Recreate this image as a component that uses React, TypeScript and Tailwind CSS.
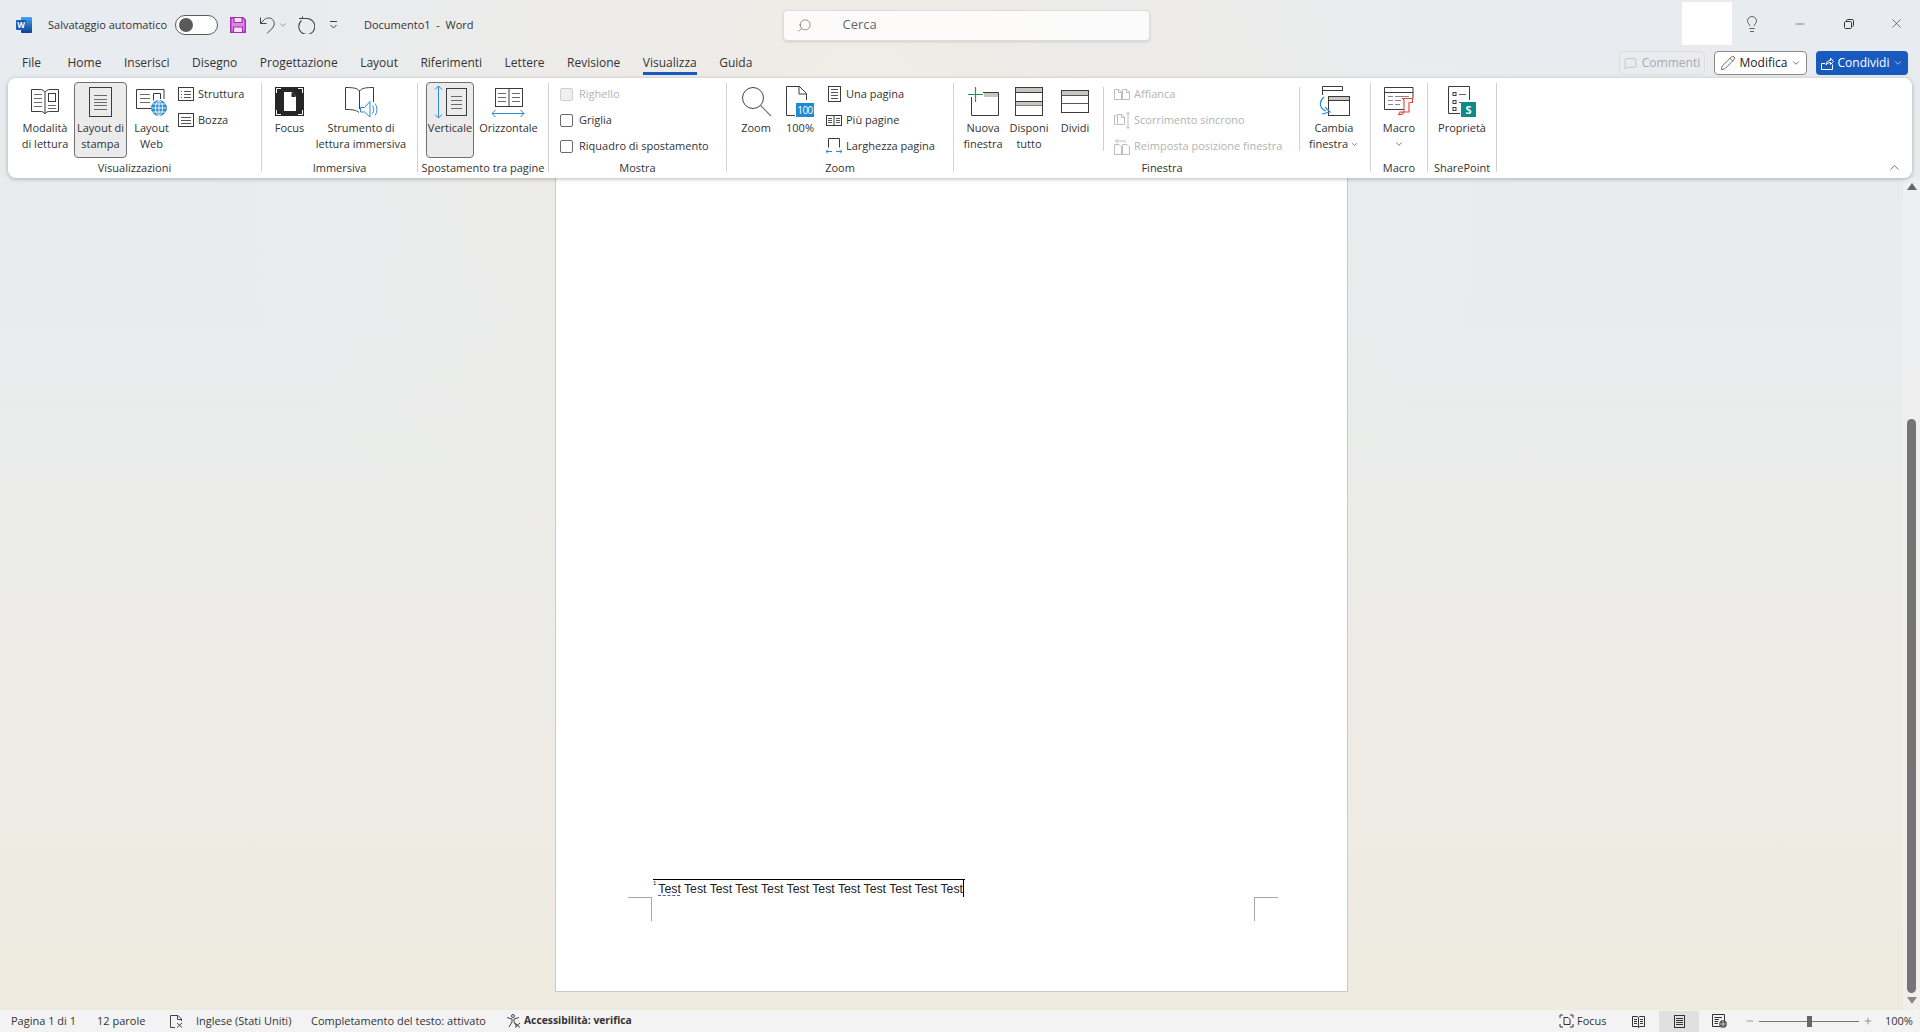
import React from "react";
import { ChevronDown, ChevronUp, Lightbulb, Minus, X, Search, Pencil, MessageSquare, Plus } from "lucide-react";

const INK = "#3b3b3b";
const BLUE = "#2a8ad4";

function Ic({ w, h, children, className }: { w: number; h: number; children: React.ReactNode; className?: string }) {
  return (
    <svg width={w} height={h} viewBox={`0 0 ${w} ${h}`} fill="none" stroke={INK} strokeWidth={1} className={className}>
      {children}
    </svg>
  );
}

function Lines({ x1, x2, ys, c = "#6a6a6a" }: { x1: number; x2: number; ys: number[]; c?: string }) {
  return <path stroke={c} d={ys.map((y) => `M${x1} ${y + 0.5}H${x2}`).join("")} />;
}

const BookIcon = () => (
  <Ic w={30} h={27}>
    <path d="M1.5 1.5H10c2.5 0 4 1 5 3 1-2 2.500-3 5-3h8.500V23.500H20c-2.500 0-4 .5-5 2.500-1-2-2.500-2.500-5-2.500H1.500Z" />
    <path d="M15 4.500V25" />
    <Lines x1={4} x2={12} ys={[6, 10, 14, 18]} />
    <rect x="18.500" y="5.500" width="7" height="8" />
    <Lines x1={18} x2={26} ys={[17, 20]} />
  </Ic>
);
const PageIcon = () => (
  <Ic w={23} h={30}>
    <rect x="0.500" y="0.500" width="22" height="29" />
    <Lines x1={5} x2={18} ys={[8, 12, 15, 18, 22]} />
  </Ic>
);
const WebIcon = () => (
  <Ic w={31} h={28}>
    <path d="M16 20.500H.5V1.500H28V11" />
    <Lines x1={4} x2={14} ys={[6, 10, 14]} />
    <path d="M17.500 12.500V5.500H24.500V11" />
    <circle cx="23" cy="20" r="7.500" fill={BLUE} stroke={BLUE} />
    <g stroke="#fff" strokeWidth=".9">
      <ellipse cx="23" cy="20" rx="3.500" ry="7.500" />
      <path d="M15.500 20H30.500M16.500 16H29.500M16.500 24H29.500M23 12.500V27.500" />
    </g>
  </Ic>
);
const StructIcon = () => (
  <Ic w={16} h={14}>
    <rect x="0.500" y="0.500" width="15" height="13" />
    <path stroke="#555" d="M3 4.500H4M3 7.500H4M3 10.500H4M6 4.500H13M6 7.500H13M6 10.500H13" />
  </Ic>
);
const DraftIcon = () => (
  <Ic w={16} h={14}>
    <rect x="0.500" y="0.500" width="15" height="13" />
    <Lines x1={3} x2={13} ys={[4, 7, 10]} c="#555" />
  </Ic>
);
const FocusIcon = () => (
  <Ic w={29} h={29}>
    <rect x="0" y="0" width="29" height="29" fill="#262626" stroke="none" />
    <path stroke="#fff" d="M1.500 6V1.500H6M23 1.500H27.500V6M1.500 23V27.500H6M23 27.500H27.500V23" />
    <path fill="#fff" stroke="none" d="M9 5H17L21 9.500V24H9Z" />
    <path fill="#262626" stroke="none" d="M16.500 5.500V10H20.500V9L17.500 5.500Z" />
  </Ic>
);
const ImmersiveIcon = () => (
  <Ic w={33} h={32}>
    <path d="M14 26.500C11 24 8 23.500 .5 23.500V1.500C8 1.500 12 2 14.500 5 17 2 21 1.500 28.500 1.500V16" />
    <path d="M14.500 5V23" />
    <path stroke={BLUE} d="M15.500 21.500H19.500L25 15.500V31L19.500 26H15.500Z" />
    <path stroke={BLUE} d="M27.500 19.500C29 22 29 25 27.500 27.500M30 17.500C32.500 21 32.500 26 30 29.500" />
  </Ic>
);
const VerticalIcon = () => (
  <Ic w={33} h={34}>
    <path stroke={BLUE} d="M4.500 1V33M1 4.500L4.500 1 8 4.500M1 29.500L4.500 33 8 29.500" />
    <rect x="12.500" y="3.500" width="20" height="27" />
    <Lines x1={17} x2={28} ys={[11, 15, 19, 23]} />
  </Ic>
);
const HorizontalIcon = () => (
  <Ic w={33} h={30}>
    <rect x="3.500" y="1.500" width="27" height="18" />
    <path d="M17 1.500V19.500" stroke="#3b3b3b" />
    <Lines x1={6} x2={14} ys={[6, 10, 14]} />
    <Lines x1={20} x2={28} ys={[6, 10, 14]} />
    <path stroke={BLUE} d="M0 26.500H32M3.500 23L0 26.500 3.500 30M28.500 23L32 26.500 28.500 30" />
  </Ic>
);
const ZoomIcon = () => (
  <Ic w={31} h={31}>
    <circle cx="12" cy="12" r="10.500" stroke="#444" />
    <path d="M19.500 19.500L30 30" stroke="#777" strokeWidth="1.200" />
  </Ic>
);
const HundredIcon = () => (
  <div className="relative h-[31px] w-[28px]">
    <Ic w={28} h={31}>
      <path d="M.5 29.500V.5H13.500L20.500 7.500V14M.5 29.500H9M13 .5V8H20.500" />
    </Ic>
    <span className="absolute bottom-[0px] right-[0px] h-[14px] w-[18px] bg-[#1f8ad4] text-center text-[10px] leading-[14px] tracking-[-0.5px] text-white">100</span>
  </div>
);
const OnePageIcon = () => (
  <Ic w={13} h={16}>
    <rect x="0.500" y="0.500" width="12" height="15" />
    <Lines x1={3} x2={10} ys={[3, 6, 9, 12]} c="#555" />
  </Ic>
);
const MultiPageIcon = () => (
  <Ic w={16} h={12}>
    <rect x="0.500" y="1.500" width="15" height="10" />
    <path d="M8 1.500V11.500" />
    <Lines x1={2} x2={6} ys={[4, 6, 8]} c="#555" />
    <Lines x1={10} x2={14} ys={[4, 6, 8]} c="#555" />
  </Ic>
);
const WidthIcon = () => (
  <Ic w={16} h={16}>
    <path d="M2.500 9.500V.5H13.500V9.500" />
    <path stroke={BLUE} d="M0 13.500H6M10 13.500H16M2 11.500L0 13.500 2 15.500M14 11.500L16 13.500 14 15.500" />
  </Ic>
);
const GREY = "#bdbdbd";
const SideBySideIcon = () => (
  <svg width="16" height="11" viewBox="0 0 16 11" fill="none" stroke={GREY}>
    <path d="M.5 10.500V.5H5L7.500 3V10.500ZM8.500 10.500V.5H13L15.500 3V10.500ZM.5 10.500H15.500" />
    <path d="M4.500 .5V3.500H7.500M12.500 .5V3.500H15.500" />
  </svg>
);
const SyncScrollIcon = () => (
  <svg width="16" height="17" viewBox="0 0 16 17" fill="none" stroke={GREY}>
    <path d="M2.500 3.500H.5V12.500H2.500M3.500 2.500H8L10.500 5V12.500H3.500ZM7.500 2.500V5.500H10.500" />
    <path d="M14 .5V16.500M12 2.500L14 .5 16 2.500M12 14.500L14 16.500 16 14.500" />
  </svg>
);
const ResetIcon = () => (
  <svg width="16" height="17" viewBox="0 0 16 17" fill="none" stroke={GREY}>
    <path d="M.5 16.500V6.500H5L7.500 9V16.500ZM8.500 16.500V6.500H13L15.500 9V16.500ZM.5 16.500H15.500" />
    <path d="M11 4.500V3H2M4 .5L1.500 3 4 5.500" />
  </svg>
);
const NewWindowIcon = () => (
  <Ic w={31} h={29}>
    <path fill="#c9c6c1" stroke="none" d="M16 6H30V10H16Z" />
    <path d="M3.500 10V28.500H30.500V5.500H15" />
    <path stroke="#1e9e4a" strokeWidth="1.200" d="M0 7.500H15M7.500 0V15" />
  </Ic>
);
const ArrangeIcon = () => (
  <Ic w={28} h={29}>
    <rect x="0.500" y="0.500" width="27" height="28" />
    <rect x="1" y="1" width="26" height="4" fill="#c9c6c1" stroke="none" />
    <path d="M.5 5.500H27.500M.5 14.500H27.500M.5 18.500H27.500" />
    <rect x="1" y="15" width="26" height="3.500" fill="#c9c6c1" stroke="none" />
  </Ic>
);
const SplitIcon = () => (
  <Ic w={28} h={23}>
    <rect x="0.500" y="0.500" width="27" height="22" />
    <rect x="1" y="1" width="26" height="4" fill="#c9c6c1" stroke="none" />
    <path d="M.5 5.500H27.500M.5 13.500H27.500" stroke="#555" />
  </Ic>
);
const SwitchIcon = () => (
  <Ic w={31} h={30}>
    <path d="M3.500 9V.5H23.500V5" />
    <path d="M3.500 4.500H23.500" />
    <rect x="9.500" y="10.500" width="21" height="19" fill="#fff" />
    <rect x="10" y="11" width="20" height="3.500" fill="#c9c6c1" stroke="none" />
    <path d="M9.500 14.500H30.500" />
    <path stroke={BLUE} strokeWidth="1.200" d="M5 11C-1 16 1 23 7 25M3 28L11 26 6 21" fill="none" />
  </Ic>
);
const MacroIcon = () => (
  <Ic w={30} h={28}>
    <path d="M21 22.500H.5V.5H29V11" />
    <path d="M.5 5.500H29" />
    <path stroke="#888" d="M4 9.500H9M11 9.500H25M4 13.500H9M11 13.500H17M4 17.500H9M11 17.500H16" />
    <path stroke="#e8423a" strokeWidth="1.100" d="M18 11.500H28.500V15.500H26M18 11.500C19.500 11.500 20 13 20 14V24C20 26 18 27.500 16.500 27.500H14C15.500 27.500 16 26 16 25H25V15" fill="#fff" />
  </Ic>
);
const PropsIcon = () => (
  <div className="relative h-[31px] w-[28px]">
    <Ic w={28} h={31}>
      <path d="M.5 27.500V.5H21.500V14M.5 27.500H12" />
      <rect x="5" y="6.500" width="3" height="3" />
      <rect x="5" y="14.500" width="3" height="3" />
      <rect x="5" y="21.500" width="3" height="3" />
      <path d="M11 8.500H18M11 16.500H15" stroke="#666" />
    </Ic>
    <span className="absolute bottom-0 right-0 h-[15px] w-[15px] bg-[#0f8a85] text-center text-[11px] font-bold leading-[15px] text-white">S</span>
  </div>
);

function Big({ w, icon, lines, active }: { w: string; icon: React.ReactNode; lines: string[]; active?: boolean }) {
  return (
    <div className={`${w} flex h-[76px] shrink-0 flex-col items-center rounded-[4px] ${active ? "border border-[#707070] bg-[#ebebeb]" : "border border-transparent"}`}>
      <div className="flex h-[37px] items-center justify-center">{icon}</div>
      <div className="whitespace-nowrap text-center leading-[16px]">
        {lines.map((l) => (
          <div key={l}>{l}</div>
        ))}
      </div>
    </div>
  );
}

function Small({ icon, label, off, check }: { icon?: React.ReactNode; label: string; off?: boolean; check?: boolean }) {
  return (
    <div className={`flex h-[24px] items-center whitespace-nowrap ${off ? "text-[#b3b3b3]" : ""}`}>
      {check ? (
        <span className={`mr-[6px] h-[13px] w-[13px] rounded-[2px] border ${off ? "border-[#cfcfcf] bg-[#efefef]" : "border-[#6b6b6b] bg-white"}`} />
      ) : (
        <span className="mr-[4px] flex w-[16px] items-center justify-center">{icon}</span>
      )}
      {label}
    </div>
  );
}

function Col({ className = "", children }: { className?: string; children: React.ReactNode }) {
  return <div className={`flex flex-col gap-[2px] ${className}`}>{children}</div>;
}

function Group({ w, pl = "", label, children }: { w: string; pl?: string; label: string; children: React.ReactNode }) {
  return (
    <div className={`${w} shrink-0 pt-[4px]`}>
      <div className={`${pl} flex h-[76px] items-start`}>{children}</div>
      <div className="mt-[2px] whitespace-nowrap text-center leading-[16px]">{label}</div>
    </div>
  );
}

const Sep = () => <div className="mt-[5px] h-[89px] w-px shrink-0 bg-[#d2d2d2]" />;
const InnerSep = ({ ml }: { ml: string }) => <div className={`${ml} mt-[5px] h-[64px] w-px shrink-0 bg-[#d2d2d2]`} />;

const TABS = ["File", "Home", "Inserisci", "Disegno", "Progettazione", "Layout", "Riferimenti", "Lettere", "Revisione", "Visualizza", "Guida"];

function TitleBar() {
  return (
    <div className="flex h-[50px] shrink-0 items-center">
      <div className="relative ml-[16px] h-[16px] w-[16px]">
        <div className="absolute right-0 top-0 h-full w-[11px] rounded-[1px] bg-gradient-to-b from-[#41a5ee] to-[#103f91]" />
        <div className="absolute left-0 top-[3px] h-[10px] w-[10px] rounded-[1px] bg-[#185abd] text-center text-[8px] font-bold leading-[10px] text-white">W</div>
      </div>
      <span className="ml-[16px] w-[121px] whitespace-nowrap text-[11px] text-[#333]">Salvataggio automatico</span>
      <div className="ml-[6px] flex h-[20px] w-[43px] items-center rounded-full border border-[#5a5a5a] bg-white pl-[3px]">
        <span className="h-[14px] w-[14px] rounded-full bg-[#5a5a5a]" />
      </div>
      <svg width="16" height="16" viewBox="0 0 16 16" className="ml-[12px]">
        <path d="M.75.75H13L15.250 3V15.250H.75Z" fill="#d98ade" stroke="#a32fb3" strokeWidth="1.500" />
        <path d="M4 1V5.500H12V1M3.500 15V10H12.500V15" fill="#f6e3f7" stroke="#a32fb3" strokeWidth="1.200" />
      </svg>
      <svg width="15" height="17" viewBox="0 0 15 17" fill="none" stroke="#444" className="ml-[14px]">
        <path d="M.5 .5V6.500H6.500M.5 6.500L4.500 2.500C7 .5 10.500 .5 12.500 2.500 15 5 14.500 8.500 12.500 11L7 16.500" />
      </svg>
      <ChevronDown size={10} strokeWidth={1.2} color="#444" className="ml-[3px]" />
      <svg width="17" height="18" viewBox="0 0 17 18" fill="none" stroke="#444" strokeWidth="1.100" className="ml-[10px]">
        <path d="M3.500 4.500A8 8 0 1 0 8.500 2.500H1M4.500 .5V2.500" />
      </svg>
      <svg width="9" height="8" viewBox="0 0 9 8" className="ml-[14px]" stroke="#444" fill="none">
        <path d="M1 .5H8M1.500 4L4.500 7 7.500 4" />
      </svg>
      <span className="ml-[26px] whitespace-nowrap text-[#333]">Documento1&nbsp; -&nbsp; Word</span>
      <div className="ml-[309px] flex h-[31px] w-[367px] items-center rounded-[4px] border border-[#dcdcdc] bg-white/80 pl-[13px] shadow-sm">
        <Search size={15} strokeWidth={1} color="#555" className="-scale-x-100" />
        <span className="ml-[31px] text-[13px] text-[#666]">Cerca</span>
      </div>
      <div className="ml-auto flex h-full items-start">
        <div className="mt-[2px] h-[43px] w-[50px] bg-white" />
        <Lightbulb size={18} strokeWidth={1} color="#333" className="ml-[11px] mt-[15px]" />
        <Minus size={14} strokeWidth={1} color="#333" className="ml-[32px] mt-[17px]" />
        <svg width="10" height="10" viewBox="0 0 10 10" className="ml-[37px] mt-[19px]" fill="none" stroke="#333">
          <path d="M2.500 2V1.500C2.500 .8 3 .5 3.500 .5H8C9 .5 9.500 1 9.500 2V6.500C9.500 7 9 7.500 8.500 7.500M1.500 2.500H6.500C7 2.500 7.500 3 7.500 3.500V8.500C7.500 9 7 9.500 6.500 9.500H1.500C1 9.500 .5 9 .5 8.500V3.500C.5 3 1 2.500 1.500 2.500Z" />
        </svg>
        <X size={15} strokeWidth={1} color="#333" className="ml-[35px] mt-[16px]" />
        <div className="w-[16px]" />
      </div>
    </div>
  );
}

function TabRow() {
  return (
    <div className="flex h-[28px] shrink-0 items-start text-[#333]">
      <div className="ml-[22px] flex gap-[22.500px] pt-[4px]">
        {TABS.map((t, i) => (
          <div key={t} className={`relative h-[21px] whitespace-nowrap text-[12px] leading-[18px] ${i === 0 ? "mr-[4px]" : ""} ${t === "Visualizza" ? "border-b-[3px] border-[#185abd] font-medium" : ""}`}>
            {t}
          </div>
        ))}
      </div>
      <div className="ml-auto mr-[12px] mt-[1px] flex h-[24px] gap-[9px] text-[12px]">
        <div className="flex w-[86px] items-center justify-center gap-[5px] rounded-[4px] border border-[#dedede] text-[#aaa]">
          <MessageSquare size={13} strokeWidth={1} color="#a5a5a5" />
          Commenti
        </div>
        <div className="flex w-[93px] items-center justify-center gap-[4px] rounded-[4px] border border-[#8a8a8a] bg-white text-[#222]">
          <Pencil size={16} strokeWidth={1} color="#222" />
          Modifica
          <ChevronDown size={10} strokeWidth={1.5} color="#222" />
        </div>
        <div className="flex w-[92px] items-center justify-center gap-[4px] rounded-[4px] bg-[#185abd] text-white">
          <svg width="13" height="13" viewBox="0 0 13 13" fill="none" stroke="#fff">
            <path d="M11.500 7.500V12.500H.5V6.500H4M5 8C5 5 7 3.500 9.500 3.500V1L12.500 4.500 9.500 7.500V5.500C7.500 5.500 6 6.500 5 8Z" />
          </svg>
          Condividi
          <ChevronDown size={10} strokeWidth={1.5} color="#fff" />
        </div>
      </div>
    </div>
  );
}

function Ribbon() {
  return (
    <div className="relative z-10 mx-[8px] flex h-[100px] shrink-0 items-start rounded-[8px] bg-white text-[#333] shadow-[0_1px_4px_rgba(0,0,0,0.28)]">
      <Group w="w-[253px]" pl="pl-[10px]" label="Visualizzazioni">
        <Big w="w-[54px]" icon={<BookIcon />} lines={["Modalità", "di lettura"]} />
        <Big w="ml-[2px] w-[53px]" active icon={<PageIcon />} lines={["Layout di", "stampa"]} />
        <Big w="ml-[4px] w-[41px]" icon={<WebIcon />} lines={["Layout", "Web"]} />
        <Col className="ml-[6px]">
          <Small icon={<StructIcon />} label="Struttura" />
          <Small icon={<DraftIcon />} label="Bozza" />
        </Col>
      </Group>
      <Sep />
      <Group w="w-[155px]" pl="pl-[7px]" label="Immersiva">
        <Big w="w-[41px]" icon={<FocusIcon />} lines={["Focus"]} />
        <Big w="ml-[6px] w-[90px]" icon={<ImmersiveIcon />} lines={["Strumento di", "lettura immersiva"]} />
      </Group>
      <Sep />
      <Group w="w-[130px]" pl="pl-[8px]" label="Spostamento tra pagine">
        <Big w="w-[48px]" active icon={<VerticalIcon />} lines={["Verticale"]} />
        <Big w="ml-[3px] w-[63px]" icon={<HorizontalIcon />} lines={["Orizzontale"]} />
      </Group>
      <Sep />
      <Group w="w-[177px]" pl="pl-[11px]" label="Mostra">
        <Col>
          <Small check off label="Righello" />
          <Small check label="Griglia" />
          <Small check label="Riquadro di spostamento" />
        </Col>
      </Group>
      <Sep />
      <Group w="w-[226px]" pl="pl-[10px]" label="Zoom">
        <Big w="w-[38px]" icon={<ZoomIcon />} lines={["Zoom"]} />
        <Big w="ml-[6px] w-[38px]" icon={<HundredIcon />} lines={["100%"]} />
        <Col className="ml-[7px]">
          <Small icon={<OnePageIcon />} label="Una pagina" />
          <Small icon={<MultiPageIcon />} label="Più pagine" />
          <Small icon={<WidthIcon />} label="Larghezza pagina" />
        </Col>
      </Group>
      <Sep />
      <Group w="w-[416px]" pl="pl-[11px]" label="Finestra">
        <Big w="w-[36px]" icon={<NewWindowIcon />} lines={["Nuova", "finestra"]} />
        <Big w="ml-[8px] w-[40px]" icon={<ArrangeIcon />} lines={["Disponi", "tutto"]} />
        <Big w="ml-[7px] w-[38px]" icon={<SplitIcon />} lines={["Dividi"]} />
        <InnerSep ml="ml-[9px]" />
        <Col className="ml-[10px] w-[185px]">
          <Small label="Affianca" off icon={<SideBySideIcon />} />
          <Small label="Scorrimento sincrono" off icon={<SyncScrollIcon />} />
          <Small label="Reimposta posizione finestra" off icon={<ResetIcon />} />
        </Col>
        <InnerSep ml="ml-0" />
        <div className="ml-[6px] flex h-[76px] w-[56px] shrink-0 flex-col items-center">
          <div className="flex h-[38px] items-center justify-center"><SwitchIcon /></div>
          <div className="text-center leading-[16px]">
            Cambia
            <div className="flex items-center justify-center gap-[2px] whitespace-nowrap">finestra <ChevronDown size={9} strokeWidth={1.5} color="#333" /></div>
          </div>
        </div>
      </Group>
      <Sep />
      <Group w="w-[56px]" label="Macro">
        <div className="flex h-[76px] w-full flex-col items-center">
          <div className="flex h-[37px] items-center justify-center"><MacroIcon /></div>
          <div className="mt-[1px] leading-[16px]">Macro</div>
          <ChevronDown size={10} strokeWidth={1.5} color="#333" className="mt-[3px]" />
        </div>
      </Group>
      <Sep />
      <Group w="w-[68px]" label="SharePoint">
        <Big w="w-full" icon={<PropsIcon />} lines={["Proprietà"]} />
      </Group>
      <Sep />
      <ChevronUp size={15} strokeWidth={1} color="#222" className="absolute bottom-[3px] right-[10px]" />
    </div>
  );
}

function CropMark({ side }: { side: "l" | "r" }) {
  return <div className={`h-[24px] w-[24px] border-t border-[#a8a8a8] ${side === "l" ? "border-r" : "border-l"}`} />;
}

function Page() {
  return (
    <div className="flex w-[793px] flex-col justify-end border-x border-b border-[#c9c9c9] bg-white pb-[70px]">
      <div className="ml-[97px] flex w-[312px] border-t border-black font-['Liberation_Sans',sans-serif] text-[12.250px] text-[#222]">
        <div className="flex h-[17px] items-end border-r border-black leading-[15px]">
          <sup className="mb-[8px] mr-[2px] text-[6px] leading-none">1</sup>
          <span className="underline decoration-[#5b50e6] decoration-dashed underline-offset-[2px]">Test</span>
          <span className="whitespace-pre"> Test Test Test Test Test Test Test Test Test Test Test</span>
        </div>
      </div>
      <div className="ml-[72px] mr-[69px] flex justify-between">
        <CropMark side="l" />
        <CropMark side="r" />
      </div>
    </div>
  );
}

function Scrollbar() {
  return (
    <div className="flex w-[17px] shrink-0 flex-col items-center rounded-[4px] bg-[#f1f1f1]/60">
      <div className="mt-[5px] h-0 w-0 border-x-[5px] border-b-[7px] border-x-transparent border-b-[#666]" />
      <div className="mt-[229px] h-[574px] w-[9px] rounded-full bg-[#757575]" />
      <div className="mt-[4px] h-0 w-0 border-x-[5px] border-t-[7px] border-x-transparent border-t-[#888]" />
    </div>
  );
}

function StatusBar() {
  return (
    <div className="flex h-[22px] shrink-0 items-center bg-[#f3f3f3] text-[11px] text-[#333]">
      <span className="ml-[11px] w-[86px]">Pagina 1 di 1</span>
      <span className="w-[73px]">12 parole</span>
      <svg width="13" height="13" viewBox="0 0 13 13" fill="none" stroke="#444">
        <path d="M5 12.500H.5V.5H8L11.500 4V6M7.500 .5V4.500H11.500M7 8L12 12.500M12 8L7 12.500" />
      </svg>
      <span className="ml-[13px] w-[115px]">Inglese (Stati Uniti)</span>
      <span className="w-[195px]">Completamento del testo: attivato</span>
      <svg width="15" height="14" viewBox="0 0 15 14" fill="none" stroke="#444">
        <circle cx="7" cy="2" r="1.500" />
        <path d="M1 3.500L6 5V8L3 13M13 3.500L8 5V8L11 13M9 9L14 13.500M14 9L9 13.500" />
      </svg>
      <span className="ml-[3px] text-[10.300px] font-bold">Accessibilità: verifica</span>
      <div className="ml-auto flex h-full items-center">
        <svg width="15" height="14" viewBox="0 0 15 14" fill="none" stroke="#333">
          <path d="M1 4V1H4M11 1H14V4M1 10V13H4M11 13H14V10M5 3.500H9L11 5.500V10.500H5Z" />
        </svg>
        <span className="ml-[3px] w-[55px]">Focus</span>
        <svg width="13" height="13" viewBox="0 0 13 13" fill="none" stroke="#333">
          <path d="M.5 1.500H5C5.500 1.500 6 1.800 6.500 2.500 7 1.800 7.500 1.500 8 1.500H12.500V11.500H8C7.500 11.500 7 12 6.500 12.500 6 12 5.500 11.500 5 11.500H.5ZM6.500 2.500V12.500M2 4.500H5M2 6.500H5M2 8.500H5M8 4.500H11M8 6.500H11M8 8.500H11" />
        </svg>
        <div className="ml-[14px] flex h-[21px] w-[40px] items-center justify-center self-end bg-[#e0e0e0]">
          <svg width="11" height="13" viewBox="0 0 11 13" fill="none" stroke="#333">
            <rect x=".5" y=".5" width="10" height="12" />
            <path d="M2 3.500H9M2 5.500H9M2 7.500H9M2 9.500H9" />
          </svg>
        </div>
        <svg width="15" height="14" viewBox="0 0 15 14" fill="none" stroke="#333" className="ml-[13px]">
          <path d="M8 12.500H.5V.5H12.500V7M2.500 3.500H10M2.500 5.500H7M2.500 7.500H6M2.500 9.500H6" />
          <circle cx="11" cy="10" r="3.500" fill="#555" stroke="#555" />
          <path stroke="#fff" strokeWidth=".6" d="M7.500 10H14.500M11 6.500V13.500" />
        </svg>
        <Minus size={10} strokeWidth={1.2} color="#444" className="ml-[18px]" />
        <div className="ml-[4px] flex h-[12px] w-[100px] items-center">
          <div className="h-px w-[48px] bg-[#777]" />
          <div className="h-[11px] w-[5px] bg-[#666]" />
          <div className="h-px flex-1 bg-[#777]" />
        </div>
        <Plus size={10} strokeWidth={1.2} color="#444" className="ml-[4px]" />
        <span className="ml-[12px] mr-[5px] w-[30px]">100%</span>
      </div>
    </div>
  );
}

export default function App() {
  return (
    <div className="flex h-screen w-full flex-col overflow-hidden bg-[radial-gradient(ellipse_at_45%_8%,#f0ece6_0%,transparent_45%),linear-gradient(180deg,#e8ebef_0%,#e9ecee_30%,#eeece6_70%,#eeeadf_100%)] font-['Open_Sans',sans-serif] text-[11px]">
      <TitleBar />
      <TabRow />
      <Ribbon />
      <div className="flex min-h-0 flex-1">
        <div className="flex flex-1 justify-center pb-[18px]">
          <Page />
        </div>
        <Scrollbar />
      </div>
      <StatusBar />
    </div>
  );
}
